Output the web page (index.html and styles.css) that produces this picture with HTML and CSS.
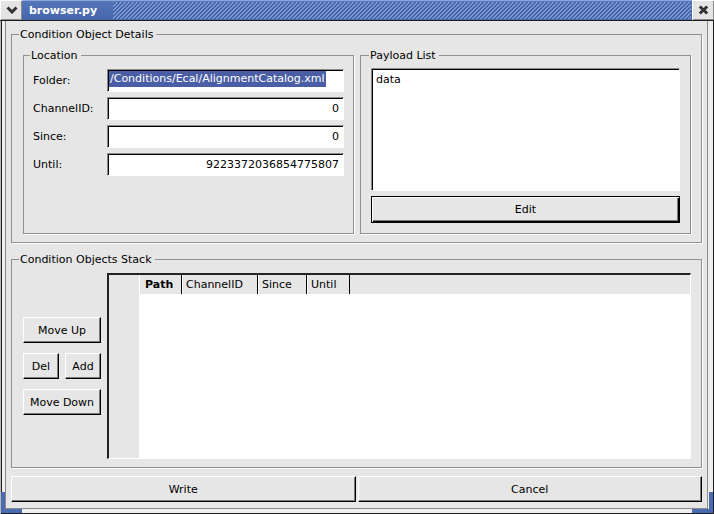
FILE: index.html
```html
<!DOCTYPE html>
<html>
<head>
<meta charset="utf-8">
<title>browser.py</title>
<link rel="stylesheet" href="styles.css">
</head>
<body>
<div class="window">
  <div class="titlebar">
    <div class="tb-btn menu">
      <svg width="12" height="8" viewBox="0 0 12 8"><path d="M1.5 1.5 L6 6 L10.5 1.5" stroke="#333" stroke-width="3" fill="none"/></svg>
    </div>
    <div class="tb-main">
      <span class="tb-title">browser.py</span>
      <div class="tb-stripes"></div>
    </div>
    <div class="tb-btn">
      <svg width="11" height="10" viewBox="0 0 11 10"><path d="M1.8 1.5 L9.2 8.5 M9.2 1.5 L1.8 8.5" stroke="#333" stroke-width="3" fill="none"/></svg>
    </div>
  </div>
  <div class="client">
    <fieldset class="group details">
      <legend>Condition Object Details</legend>
      <div class="details-row">
        <fieldset class="group location">
          <legend>Location</legend>
          <div class="form">
            <span class="label">Folder:</span>
            <div class="field folder"><span class="sel">/Conditions/Ecal/AlignmentCatalog.xml</span></div>
            <span class="label">ChannelID:</span>
            <div class="field num">0</div>
            <span class="label">Since:</span>
            <div class="field num">0</div>
            <span class="label">Until:</span>
            <div class="field num">9223372036854775807</div>
          </div>
        </fieldset>
        <fieldset class="group payload">
          <legend>Payload List</legend>
          <div class="listbox"><div class="item">data</div></div>
          <button class="btn default edit">Edit</button>
        </fieldset>
      </div>
    </fieldset>
    <fieldset class="group stack">
      <legend>Condition Objects Stack</legend>
      <div class="stack-body">
        <div class="stack-buttons">
          <button class="btn">Move Up</button>
          <div class="pair">
            <button class="btn">Del</button>
            <button class="btn">Add</button>
          </div>
          <button class="btn">Move Down</button>
        </div>
        <div class="table">
          <div class="corner-cell"></div>
          <div class="hheader">
            <div class="hcell path">Path</div>
            <div class="hcell ch">ChannelID</div>
            <div class="hcell since">Since</div>
            <div class="hcell until">Until</div>
          </div>
          <div class="vheader"></div>
          <div class="tbody"></div>
        </div>
      </div>
    </fieldset>
    <div class="actions">
      <button class="btn">Write</button>
      <button class="btn">Cancel</button>
    </div>
  </div>
  <div class="corner bl"></div>
  <div class="corner br"></div>
</div>
</body>
</html>
```
FILE: styles.css
```css
* { box-sizing: border-box; }
html, body { margin: 0; padding: 0; }
body {
  font-family: "DejaVu Sans", sans-serif;
  font-size: 11px;
  color: #000;
  background: #e6e6e6;
}
.window {
  position: relative;
  width: 714px;
  height: 514px;
  display: flex;
  flex-direction: column;
  background: #efefef;
  box-shadow: inset 1px 0 0 #b8b8b8, inset 2px 0 0 #1e1e1e, inset -1px 0 0 #1e1e1e, inset 0 -1px 0 #1e1e1e;
}
.titlebar {
  display: flex;
  height: 21px;
  border-bottom: 1px solid #1e1e1e;
  background: #4a6ab1;
}
.tb-btn {
  width: 22px;
  height: 20px;
  background: #e4e4e4;
  display: flex;
  align-items: center;
  justify-content: center;
  box-shadow: inset 1px 1px 0 #fff, inset -1px -1px 0 #8a8a8a;
}
.tb-btn.menu { padding-left: 2px; }
.tb-main {
  flex: 1;
  display: flex;
  align-items: center;
  background: linear-gradient(#8fa8dc 0 1px, #5575b9 1px, #4767ad 19px);
}
.tb-title {
  color: #fff;
  font-weight: bold;
  font-size: 11px;
  padding-left: 7px;
}
.tb-stripes {
  flex: 1;
  height: 17px;
  margin: 1px 1px 0 16px;
  background-color: #4363a9;
  background-image: linear-gradient(135deg, #7c97d1 0 12.5%, transparent 12.5% 37.5%, #7c97d1 37.5% 62.5%, transparent 62.5% 87.5%, #7c97d1 87.5%);
  background-size: 4px 4px;
}
.client {
  flex: 1;
  margin: 0 6px 5px 5px;
  border: 1px solid #8a8a8a;
  border-top: 0;
  background: #e6e6e6;
  padding: 0 5px 6px 5px;
  display: flex;
  flex-direction: column;
}
.group {
  margin: 0;
  min-width: 0;
  border: 1px solid #909090;
  box-shadow: 1px 1px 0 #fff;
}
legend {
  font-size: 11px;
  line-height: 13px;
  padding: 0 3px 0 1px;
}
.details {
  margin-top: 7px;
  padding: 8px 10px 8px 11px;
}
.details > legend { margin-left: -4px; }
.details-row {
  display: grid;
  grid-template-columns: 1fr 1fr;
  column-gap: 6px;
}
.location { padding: 7px 9px 0 9px; }
.location > legend { margin-left: -3px; }
.payload { padding: 6px 10px 10px 10px; }
.payload > legend { margin-left: -2px; }
.form {
  display: grid;
  grid-template-columns: 74px 1fr;
  grid-auto-rows: 23px;
  row-gap: 5px;
  align-items: center;
}
.field {
  height: 23px;
  background: #fff;
  border: 1px solid;
  border-color: #8a8a8a #fff #fff #8a8a8a;
  box-shadow: inset 1px 1px 0 #000;
  line-height: 21px;
  padding: 0 4px 0 2px;
  white-space: nowrap;
  overflow: hidden;
}
.field.num { text-align: right; }
.field.folder { padding: 1px 0 0 1px; line-height: normal; }
.sel {
  display: inline-block;
  background: #4a5ea5;
  color: #fff;
  line-height: 16px;
  padding: 0 1px;
}
.listbox {
  height: 123px;
  background: #fff;
  border: 1px solid;
  border-color: #8a8a8a #fff #fff #8a8a8a;
  box-shadow: inset 1px 1px 0 #000;
  padding: 4px 3px 0 4px;
  line-height: 13px;
}
.btn {
  display: block;
  font: inherit;
  color: #000;
  background: #e6e6e6;
  border: 1px solid;
  border-color: #fff #000 #000 #fff;
  box-shadow: inset -1px -1px 0 #7a7a7a;
  padding: 0;
  height: 26px;
  width: 100%;
}
.btn.default {
  border-color: #000;
  box-shadow: inset 1px 1px 0 #fff, inset -1px -1px 0 #000, inset -2px -2px 0 #7a7a7a;
}
.edit { margin-top: 5px; height: 27px; }
.stack {
  margin-top: 10px;
  padding: 7px 10px 8px 11px;
}
.stack > legend { margin-left: -4px; }
.stack-body {
  display: flex;
  gap: 6px;
}
.stack-buttons {
  width: 78px;
  flex: none;
  display: flex;
  flex-direction: column;
  justify-content: center;
  gap: 10px;
}
.pair {
  display: flex;
  justify-content: space-between;
}
.pair .btn { width: 36px; }
.table {
  flex: 1;
  height: 186px;
  display: grid;
  grid-template-columns: 30px 1fr;
  grid-template-rows: 19px 1fr;
  border-style: solid;
  border-width: 2px 1px 1px 2px;
  border-color: #222 #fff #fff #222;
  background: #e6e6e6;
}
.hheader {
  display: flex;
  background: #e6e6e6;
}
.hcell {
  border-left: 1px solid #fff;
  border-right: 1px solid #000;
  padding-left: 3px;
  line-height: 19px;
  white-space: nowrap;
}
.hcell.path { width: 43px; padding-left: 5px; font-weight: bold; }
.hcell.ch { width: 76px; }
.hcell.since { width: 49px; }
.hcell.until { width: 43px; }
.tbody { background: #fff; }
.actions {
  margin-top: 8px;
  display: grid;
  grid-template-columns: 1fr 1fr;
  column-gap: 2px;
}
.corner {
  position: absolute;
  bottom: 1px;
  width: 21px;
  height: 21px;
  border-bottom: 4px solid #4a6ab1;
}
.corner.bl { left: 1px; border-left: 4px solid #4a6ab1; }
.corner.br { right: 1px; border-right: 4px solid #4a6ab1; }
```
